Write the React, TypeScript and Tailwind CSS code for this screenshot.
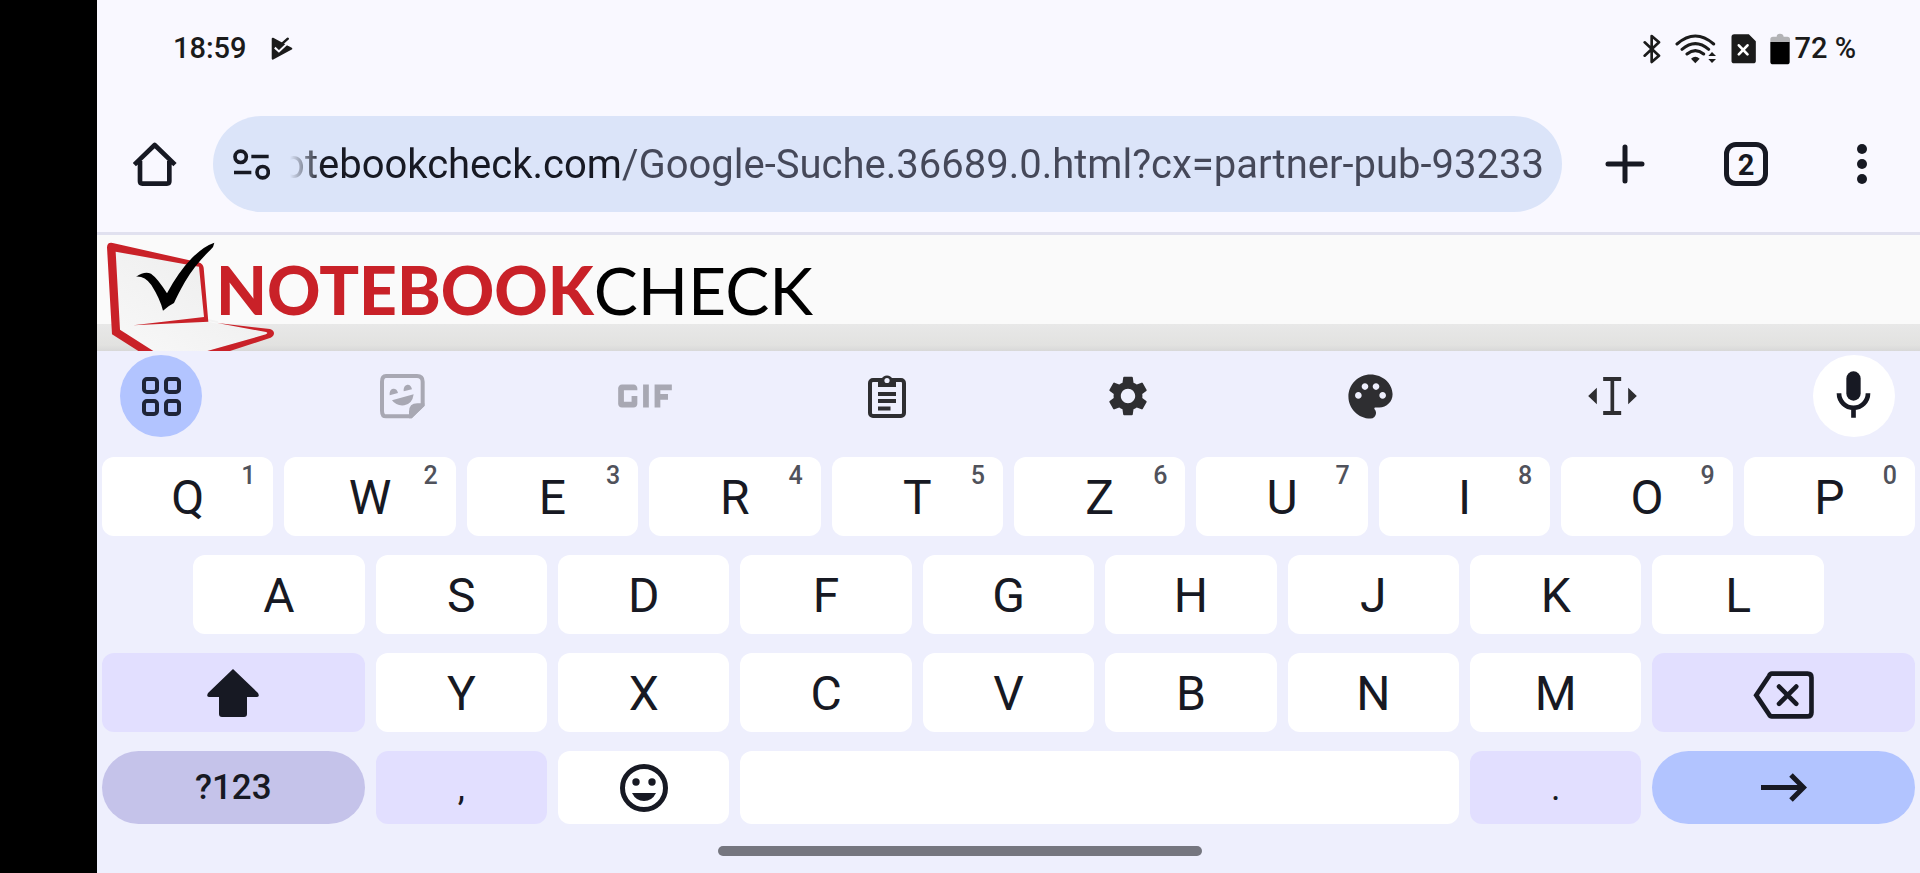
import { useState } from 'react'
import type { ReactNode } from 'react'
import { MdGif, MdPalette, MdSettings } from 'react-icons/md'

const URL_TEXT = 'notebookcheck.com/Google-Suche.36689.0.html?cx=partner-pub-93233'

const topRow = ['Q', 'W', 'E', 'R', 'T', 'Z', 'U', 'I', 'O', 'P']
const homeRow = ['A', 'S', 'D', 'F', 'G', 'H', 'J', 'K', 'L']
const bottomRow = ['Y', 'X', 'C', 'V', 'B', 'N', 'M']

function PlayCheckIcon() {
    return (
        <svg className="h-[24px] w-[22px]" viewBox="26 20 64 70" fill="none" aria-hidden="true">
            <path d="M31 25l54 29-54 29z" fill="#1b1b1b" stroke="#1b1b1b" strokeWidth="6" strokeLinejoin="round" />
            <path d="M60 20h30v24l-14 2z" fill="#f9f8ff" />
            <path d="M50 47l25-22" stroke="#1b1b1b" strokeWidth="7" strokeLinecap="round" />
            <path d="M37 51l12 11 34-32" stroke="#f9f8ff" strokeWidth="6" />
        </svg>
    )
}

function BluetoothIcon() {
    return (
        <svg className="h-[30px] w-[18px]" viewBox="428 100 54 90" fill="none" stroke="#1b1b1b" strokeWidth="8" aria-hidden="true">
            <path d="M433 125l43 40-22 19V106l22 19-43 40" strokeLinejoin="round" strokeLinecap="round" />
        </svg>
    )
}

function WifiIcon() {
    return (
        <svg className="h-[30px] w-[42px]" viewBox="533 100 126 90" fill="none" stroke="#1b1b1b" strokeWidth="9" strokeLinecap="round" aria-hidden="true">
            <path d="M539 130q55-48 110 0M554 146q40-34 80 0M569 160q25-20 50 0" />
            <path d="M581 174q13-12 26 0l-13 14z" fill="#1b1b1b" stroke="none" />
            <path d="M633 166l11-12 12 12zM633 175h23l-12 12z" fill="#1b1b1b" stroke="none" />
        </svg>
    )
}

function SimIcon() {
    return (
        <svg className="h-[30px] w-[25px]" viewBox="695 100 74 90" aria-hidden="true">
            <path d="M704 101h44l21 21v58q0 8-8 8h-57q-8 0-8-8v-71q0-8 8-8z" fill="#1b1b1b" />
            <path d="M718 134l26 27M744 134l-26 27" stroke="#fff" strokeWidth="8" strokeLinecap="round" />
        </svg>
    )
}

function BatteryIcon() {
    return (
        <svg className="h-[32px] w-[20px]" viewBox="811 94 60 96" aria-hidden="true">
            <path d="M812 121v-8q0-8 8-8h11q0-9 10-9t11 9h11q8 0 8 8v8z" fill="#b3b3b6" />
            <path d="M812 121h58v59q0 8-8 8h-42q-8 0-8-8z" fill="#000" />
        </svg>
    )
}

function LaptopLogo() {
    return (
        <svg className="relative -mr-[68px] h-[116px] w-[187px] shrink-0" viewBox="21 30 561 348" aria-hidden="true">
            <defs>
                <linearGradient id="screen" x1="0" y1="1" x2="1" y2="0">
                    <stop offset="0" stopColor="#f8f8f8" />
                    <stop offset="1" stopColor="#ebebeb" />
                </linearGradient>
            </defs>
            <path d="M70 70L330 122l14 158 200 44-190 54H170l-90-60z" fill="url(#screen)" />
            <path d="M356 289l30 5L360 235zM356 291L345 120l237-60v236H384z" fill="#fafafa" />
            <path d="M51 67q1-16 17-13l257 58q14 4 16 16l14 162-225 11 212-25-15-151L77 80l13 234 100 64h-45l-79-50z" fill="#c92128" />
            <path d="M382 294l158 18q12 4 12 13 0 8-10 13l-122 40h-68l176-50q8-4 0-7z" fill="#c92128" />
            <path d="M138 155q26-18 45-9 20 14 48 59 33-62 74-105 35-36 68-47-1 12-12 22-45 43-76 95-22 39-33 64-18 9-33 23-9-36-35-77-20-27-46-25z" fill="#000" />
        </svg>
    )
}

function StickerIcon() {
    return (
        <svg className="h-[45px] w-[45px]" viewBox="874 446 135 135" aria-hidden="true">
            <path d="M892 452h93q17 0 17 17v70l-35 34h-75q-12 0-12-17v-87q0-17 12-17z" fill="none" stroke="#a8a8b3" strokeWidth="12" />
            <path d="M961 579v-20q0-25 25-25h21v8l-38 37zM903 510q-2-17 10-20 12-1 15 13zM945 498q-1-18 11-20 11-1 14 14zM910 525l65-18q-4 29-28 33-24 3-37-15z" fill="#a8a8b3" />
        </svg>
    )
}

function ClipboardIcon() {
    return (
        <svg className="h-[44px] w-[38px]" viewBox="0 0 38 44" aria-hidden="true">
            <rect x="2" y="6" width="34" height="36" rx="3" fill="none" stroke="#2e2e31" strokeWidth="4" />
            <path d="M10 13V5h3.500a6 6 0 0 1 11 0H28v8z" fill="#2e2e31" />
            <circle cx="19" cy="6.500" r="2.600" fill="#eeeffd" />
            <path d="M10 20h18M10 27h18M10 34.500h12.500" stroke="#2e2e31" strokeWidth="4" />
        </svg>
    )
}

function CursorIcon() {
    return (
        <svg className="h-[38px] w-[49px]" viewBox="444 111 146 114" fill="#2e2e31" aria-hidden="true">
            <path d="M489 111h54v12h-21v90h21v12h-54v-12h22v-90h-22zM470 143v50l-26-25zM564 143v50l26-25z" />
        </svg>
    )
}

function MicIcon() {
    return (
        <svg className="mb-1 h-[47px] w-[35px]" viewBox="1191 95 105 141" aria-hidden="true">
            <rect x="1222" y="96" width="43" height="88" rx="21.500" fill="#171923" />
            <path d="M1200 162a43.500 43.500 0 0 0 87 0M1243.500 205v30" fill="none" stroke="#171923" strokeWidth="14" />
        </svg>
    )
}

function ToolButton({ label, className = '', children }: { label: string; className?: string; children: ReactNode }) {
    return (
        <button
            type="button"
            aria-label={label}
            className={`flex size-[82px] shrink-0 items-center justify-center rounded-full ${className}`}
        >
            {children}
        </button>
    )
}

interface KeyProps {
    label?: string
    className?: string
    hint?: string
    children: ReactNode
}

function Key({ label, className = 'col-span-2 rounded-xl bg-white pt-[2px]', hint, children }: KeyProps) {
    return (
        <button type="button" aria-label={label} className={`relative flex items-center justify-center ${className}`}>
            {children}
            {hint && (
                <span className="absolute top-[5px] right-[18px] text-[25px] leading-7 font-medium text-[#50525b]">{hint}</span>
            )}
        </button>
    )
}

export default function App() {
    const [url, setUrl] = useState(URL_TEXT)

    return (
        <div className="flex min-h-screen bg-black font-['Roboto',sans-serif] text-[#171923]">
            <div className="ml-[97px] flex min-w-0 flex-1 flex-col bg-[#eeeffd]">
                {/* Status bar */}
                <div className="flex h-24 items-center justify-between bg-[#f9f8ff] pt-[2px] pr-16 pl-[76px] text-[29px] font-medium text-[#1b1b1b]">
                    <div className="flex items-center gap-6">
                        <span>18:59</span>
                        <PlayCheckIcon />
                    </div>
                    <div className="flex items-center gap-1">
                        <div className="flex items-center gap-[14px]">
                            <BluetoothIcon />
                            <WifiIcon />
                            <SimIcon />
                            <BatteryIcon />
                        </div>
                        <span>72 %</span>
                    </div>
                </div>

                {/* Browser toolbar */}
                <div className="flex items-center border-b-[3px] border-[#e1e1ef] bg-[#f9f8ff] py-5">
                    <button type="button" aria-label="Home" className="flex w-[116px] justify-center">
                        <svg className="size-[44px]" viewBox="129 427 132 132" fill="none" stroke="#171923" strokeWidth="14" aria-hidden="true">
                            <path d="M133 495l61-59 61 59M150 484v61q0 7 7 7h74q7 0 7-7v-61" strokeLinejoin="round" />
                        </svg>
                    </button>
                    <div className="flex h-24 min-w-0 flex-1 items-center gap-5 rounded-full bg-[#dbe4f9] pr-[18px] pl-5">
                        <button type="button" aria-label="Site settings">
                            <svg className="h-[31px] w-[37px]" viewBox="429 447 111 92" fill="none" stroke="#171923" strokeWidth="11" aria-hidden="true">
                                <circle cx="452" cy="470" r="17" />
                                <circle cx="518" cy="516" r="17" />
                                <path d="M484 469h52M432 517h52" />
                            </svg>
                        </button>
                        {/* right-aligned so that the end of a long address stays in view, domain darker than the path */}
                        <div className="flex min-w-0 flex-1 justify-end overflow-hidden [mask-image:linear-gradient(to_right,transparent,black_32px)]">
                            <input
                                type="text"
                                aria-label="Address"
                                value={url}
                                onChange={(e) => setUrl(e.target.value)}
                                spellCheck={false}
                                className="h-16 w-[1400px] shrink-0 bg-[linear-gradient(to_right,#171923_calc(100%_-_921px),#454859_calc(100%_-_921px))] bg-clip-text text-right text-[40px] text-transparent outline-none"
                            />
                        </div>
                    </div>
                    <button type="button" aria-label="New tab" className="flex w-[126px] justify-center">
                        <svg className="size-[40px]" viewBox="0 0 40 40" stroke="#171923" strokeWidth="5" strokeLinecap="round" aria-hidden="true">
                            <path d="M20 3v34M3 20h34" />
                        </svg>
                    </button>
                    <button type="button" aria-label="Switch tabs" className="flex w-[116px] justify-center">
                        <span className="flex size-[44px] items-center justify-center rounded-xl border-[5px] border-[#171923] pt-[2px] text-[29px] leading-none font-bold">
                            2
                        </span>
                    </button>
                    <button type="button" aria-label="More options" className="flex w-[116px] flex-col items-center gap-[5px]">
                        <span className="size-[10px] rounded-full bg-[#171923]" />
                        <span className="size-[10px] rounded-full bg-[#171923]" />
                        <span className="size-[10px] rounded-full bg-[#171923]" />
                    </button>
                </div>

                {/* Page */}
                <div className="h-[116px] overflow-hidden bg-linear-to-b from-[#e8e8e8] from-77% via-[#e2e2e0] via-95% to-[#d8d8d8]">
                    <div className="h-[89px] bg-[#fafafa]">
                        <a href="#" className="flex items-start font-['Lato',sans-serif] text-[66px] leading-[110px]">
                            <LaptopLogo />
                            <span className="relative font-black text-[#c92128]">NOTEBOOK</span>
                            <span className="relative text-black">CHECK</span>
                        </a>
                    </div>
                </div>

                {/* Keyboard */}
                <div className="flex flex-1 flex-col bg-[#eeeffd]">
                    <div className="flex justify-between pt-1 pr-[25px] pl-[23px]">
                        <ToolButton label="Shortcuts" className="bg-[#b2c4ff]">
                            <span className="grid grid-cols-2 gap-[5px]">
                                {[0, 1, 2, 3].map(i => (
                                    <span key={i} className="size-[17px] rounded-[5px] border-4 border-[#1e2438]" />
                                ))}
                            </span>
                        </ToolButton>
                        <ToolButton label="Stickers">
                            <StickerIcon />
                        </ToolButton>
                        <ToolButton label="GIF">
                            <MdGif className="shrink-0 text-[#a8a8b3]" size={92} />
                        </ToolButton>
                        <ToolButton label="Clipboard">
                            <ClipboardIcon />
                        </ToolButton>
                        <ToolButton label="Settings">
                            <MdSettings className="text-[#2e2e31]" size={48} />
                        </ToolButton>
                        <ToolButton label="Theme">
                            <MdPalette className="text-[#2e2e31]" size={53} />
                        </ToolButton>
                        <ToolButton label="Text editing">
                            <CursorIcon />
                        </ToolButton>
                        <ToolButton label="Voice input" className="bg-white">
                            <MicIcon />
                        </ToolButton>
                    </div>

                    <div className="mt-5 grid auto-rows-[79px] grid-cols-20 gap-x-[11px] gap-y-[19px] px-[5px] text-[48px]">
                        {topRow.map((k, i) => (
                            <Key key={k} hint={String((i + 1) % 10)}>{k}</Key>
                        ))}
                        {homeRow.map((k, i) => (
                            <Key
                                key={k}
                                className={i === 0 ? 'col-span-2 col-start-2 rounded-xl bg-white pt-[2px]' : undefined}
                            >
                                {k}
                            </Key>
                        ))}
                        <Key label="Shift" className="col-span-3 col-start-1 rounded-xl bg-[#e2dfff]">
                            <svg className="h-[48px] w-[52px]" viewBox="0 0 52 48" fill="#171923" aria-hidden="true">
                                <path d="M26 0l25 24q2 4-1 4H40v17q0 3-3 3H15q-3 0-3-3V28H2q-3 0-1-4z" />
                            </svg>
                        </Key>
                        {bottomRow.map(k => (
                            <Key key={k}>{k}</Key>
                        ))}
                        <Key label="Backspace" className="col-span-3 rounded-xl bg-[#e2dfff]">
                            <svg className="mt-1 h-[48px] w-[62px]" viewBox="1056 93 184 145" fill="none" stroke="#171923" strokeWidth="14" aria-hidden="true">
                                <path d="M1111 101h108q12 0 12 12v105q0 12-12 12h-108q-5 0-8-6l-39-58 39-58q3-7 8-7z" />
                                <path d="M1133 140l52 52M1185 140l-52 52" strokeLinecap="round" />
                            </svg>
                        </Key>
                    </div>

                    <div className="mt-[19px] grid auto-rows-[73px] grid-cols-20 gap-x-[11px] px-[5px]">
                        <Key className="col-span-3 rounded-full bg-[#c5c3ea] pt-[2px] text-[35px] font-medium">?123</Key>
                        <Key className="col-span-2 rounded-xl bg-[#e2dfff] text-[36px]">,</Key>
                        <Key label="Emoji" className="col-span-2 rounded-xl bg-white">
                            <svg className="size-[48px]" viewBox="0 0 48 48" aria-hidden="true">
                                <circle cx="24" cy="24" r="21.500" fill="none" stroke="#171923" strokeWidth="5" />
                                <circle cx="16" cy="18" r="3.700" fill="#171923" />
                                <circle cx="32" cy="18" r="3.700" fill="#171923" />
                                <path d="M12 29h24q-4 8-12 8t-12-8z" fill="#171923" />
                            </svg>
                        </Key>
                        <Key label="Space" className="col-span-8 rounded-xl bg-white">{null}</Key>
                        <Key className="col-span-2 rounded-xl bg-[#e2dfff] text-[36px]">.</Key>
                        <Key label="Enter" className="col-span-3 rounded-full bg-[#b2c4ff]">
                            <svg className="h-[29px] w-[46px]" viewBox="0 0 46 29" fill="none" stroke="#171923" strokeWidth="5" aria-hidden="true">
                                <path d="M0 14.500h42M30 2l12.500 12.500L30 27" />
                            </svg>
                        </Key>
                    </div>

                    {/* Home indicator, centred on the whole screen including the cutout strip */}
                    <div className="mt-[22px] mr-[97px] mb-[17px] h-[10px] w-[484px] self-center rounded-full bg-[#75767f]" />
                </div>
            </div>
        </div>
    )
}
